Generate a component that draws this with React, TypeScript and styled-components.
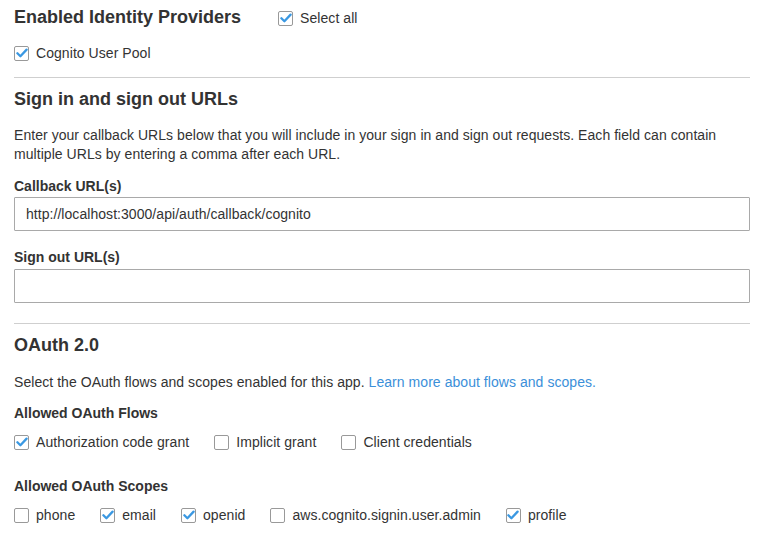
import React from 'react';
import styled, { createGlobalStyle } from 'styled-components';

const GlobalStyle = createGlobalStyle`
  html, body {
    margin: 0;
    padding: 0;
    background: #fff;
  }
  body {
    font-family: "Liberation Sans", Arial, Helvetica, sans-serif;
    color: #333;
  }
`;

type Option = { label: string; checked: boolean };

const flows: Option[] = [
  { label: 'Authorization code grant', checked: true },
  { label: 'Implicit grant', checked: false },
  { label: 'Client credentials', checked: false },
];

const scopes: Option[] = [
  { label: 'phone', checked: false },
  { label: 'email', checked: true },
  { label: 'openid', checked: true },
  { label: 'aws.cognito.signin.user.admin', checked: false },
  { label: 'profile', checked: true },
];

function Checkbox({ label, checked }: Option) {
  return (
    <CheckLabel>
      <Box>
        {checked && (
          <svg width="12" height="10" viewBox="0 0 12 10">
            <path
              d="M1.4 5.2 L4.4 8.2 L10.6 1.6"
              fill="none"
              stroke="#3a98e2"
              strokeWidth="2.3"
              strokeLinecap="round"
              strokeLinejoin="round"
            />
          </svg>
        )}
      </Box>
      <span>{label}</span>
    </CheckLabel>
  );
}

function App() {
  return (
    <Page>
      <GlobalStyle />

      <Section>
        <TitleRow>
          <Heading>Enabled Identity Providers</Heading>
          <SelectAll>
            <Checkbox label="Select all" checked />
          </SelectAll>
        </TitleRow>
        <OptionRow $top={15}>
          <Checkbox label="Cognito User Pool" checked />
        </OptionRow>
      </Section>

      <Divider $top={14} />

      <Section>
        <Heading>Sign in and sign out URLs</Heading>
        <Text $top={16}>
          Enter your callback URLs below that you will include in your sign in and sign out
          requests. Each field can contain multiple URLs by entering a comma after each URL.
        </Text>
        <FieldLabel $top={13}>Callback URL(s)</FieldLabel>
        <TextInput $top={2} defaultValue="http://localhost:3000/api/auth/callback/cognito" />
        <FieldLabel $top={17}>Sign out URL(s)</FieldLabel>
        <TextInput $top={3} defaultValue="" />
      </Section>

      <Divider $top={20} />

      <Section>
        <Heading>OAuth 2.0</Heading>
        <Text $top={17}>
          Select the OAuth flows and scopes enabled for this app.{' '}
          <Link href="#">Learn more about flows and scopes.</Link>
        </Text>
        <FieldLabel $top={12}>Allowed OAuth Flows</FieldLabel>
        <OptionRow $top={10}>
          {flows.map((f) => (
            <Checkbox key={f.label} {...f} />
          ))}
        </OptionRow>
        <FieldLabel $top={25}>Allowed OAuth Scopes</FieldLabel>
        <OptionRow $top={10}>
          {scopes.map((s) => (
            <Checkbox key={s.label} {...s} />
          ))}
        </OptionRow>
      </Section>
    </Page>
  );
}

export default App;

const Page = styled.main`
  width: 770px;
  box-sizing: border-box;
  padding: 6px 20px 0 14px;
`;

const Section = styled.section`
  display: flex;
  flex-direction: column;
`;

const TitleRow = styled.div`
  display: flex;
  align-items: center;
  gap: 37px;
`;

const SelectAll = styled.div`
  padding-top: 2px;
`;

const Heading = styled.h2`
  margin: 0;
  font-size: 18px;
  line-height: 22px;
  font-weight: 700;
  color: #333;
`;

const Text = styled.p<{ $top: number }>`
  margin: ${({ $top }) => $top}px 0 0;
  font-size: 14px;
  line-height: 19px;
  letter-spacing: 0.05px;
  color: #333;
`;

const Link = styled.a`
  color: #3b8fd9;
  text-decoration: none;
`;

const FieldLabel = styled.label<{ $top: number }>`
  display: block;
  margin-top: ${({ $top }) => $top}px;
  font-size: 14px;
  line-height: 18px;
  font-weight: 700;
  color: #333;
`;

const TextInput = styled.input<{ $top: number }>`
  display: block;
  margin-top: ${({ $top }) => $top}px;
  box-sizing: border-box;
  width: 100%;
  height: 34px;
  padding: 0 11px;
  border: 1px solid #a9a9a9;
  border-radius: 1px;
  font-family: "Liberation Sans", Arial, sans-serif;
  font-size: 14px;
  letter-spacing: 0.05px;
  color: #333;
  outline: none;
`;

const Divider = styled.hr<{ $top: number }>`
  margin: ${({ $top }) => $top}px 0 10px;
  border: 0;
  border-top: 1px solid #cfcfcf;
`;

const OptionRow = styled.div<{ $top: number }>`
  display: flex;
  align-items: center;
  gap: 25px;
  margin-top: ${({ $top }) => $top}px;
`;

const CheckLabel = styled.label`
  display: inline-flex;
  align-items: center;
  gap: 7px;
  height: 20px;
  font-size: 14px;
  letter-spacing: 0.06px;
  color: #333;
  cursor: pointer;
`;

const Box = styled.span`
  display: inline-flex;
  align-items: center;
  justify-content: center;
  box-sizing: border-box;
  width: 15px;
  height: 15px;
  border: 1px solid #999;
  border-radius: 2px;
  background: #fff;
`;
